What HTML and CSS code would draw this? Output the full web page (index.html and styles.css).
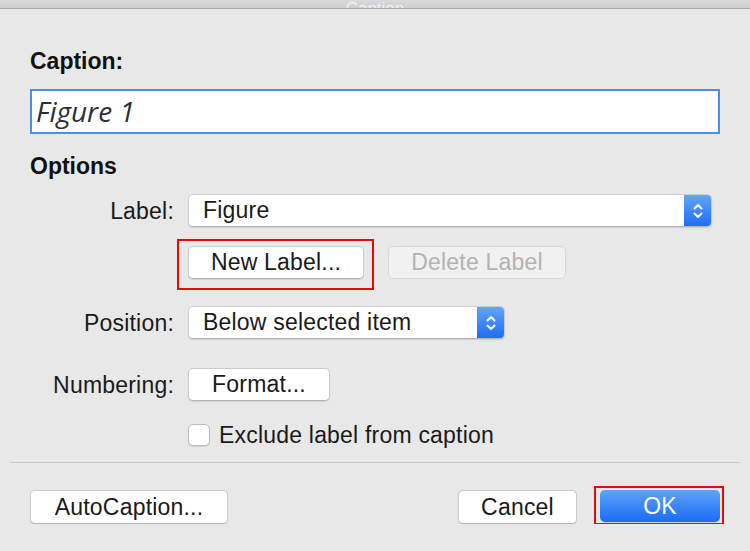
FILE: index.html
```html
<!DOCTYPE html>
<html lang="en">
<head>
  <meta charset="UTF-8">
  <title>Caption</title>
  <link rel="stylesheet" href="styles.css">
</head>
<body>
  <div class="titlebar"><span class="title">Caption</span></div>

  <div class="content">
    <h2 class="heading caption-heading">Caption:</h2>
    <div class="caption-input">Figure 1</div>

    <h2 class="heading options-heading">Options</h2>

    <div class="row row-label">
      <span class="row-name">Label:</span>
      <div class="select select-wide">
        <span class="select-text">Figure</span>
        <span class="stepper">
          <svg width="14" height="20" viewBox="0 0 14 20"><path d="M3.5 7.5 L7 4 L10.5 7.5 M3.5 12.5 L7 16 L10.5 12.5" fill="none" stroke="#fff" stroke-width="2" stroke-linecap="round" stroke-linejoin="round"/></svg>
        </span>
      </div>
    </div>

    <div class="row row-buttons">
      <span class="row-name"></span>
      <button class="btn btn-newlabel marked">New Label...</button>
      <button class="btn btn-disabled btn-delete">Delete Label</button>
    </div>

    <div class="row row-position">
      <span class="row-name">Position:</span>
      <div class="select select-position">
        <span class="select-text">Below selected item</span>
        <span class="stepper">
          <svg width="14" height="20" viewBox="0 0 14 20"><path d="M3.5 7.5 L7 4 L10.5 7.5 M3.5 12.5 L7 16 L10.5 12.5" fill="none" stroke="#fff" stroke-width="2" stroke-linecap="round" stroke-linejoin="round"/></svg>
        </span>
      </div>
    </div>

    <div class="row row-numbering">
      <span class="row-name">Numbering:</span>
      <button class="btn btn-format">Format...</button>
    </div>

    <div class="row row-check">
      <span class="row-name"></span>
      <span class="checkbox"></span>
      <span class="check-text">Exclude label from caption</span>
    </div>
  </div>

  <div class="separator"></div>

  <div class="footer">
    <button class="btn btn-auto">AutoCaption...</button>
    <div class="footer-right">
      <button class="btn btn-cancel">Cancel</button>
      <button class="btn btn-ok marked">OK</button>
    </div>
  </div>
</body>
</html>
```

FILE: styles.css
```css
body {
  margin: 0;
  background: #e8e8e8;
  font-family: 'Liberation Sans', Arial, sans-serif;
  color: #1a1a1a;
  overflow: hidden;
}

.titlebar {
  height: 8px;
  overflow: hidden;
  background: linear-gradient(#dadada, #cfcfcf);
  border-bottom: 1px solid #aaaaaa;
  text-align: center;
}

.title {
  display: inline-block;
  margin-top: -13px;
  font-size: 17px;
  line-height: 20px;
  color: #f0f0f0;
}

.content {
  padding: 0 30px;
}

.heading {
  margin: 0;
  font-size: 23px;
  font-weight: bold;
  line-height: 24px;
  color: #111;
}

.caption-heading {
  padding-top: 40px;
}

.caption-input {
  margin-top: 16px;
  height: 41px;
  border: 2px solid #4a8ee6;
  background: #fff;
  font-family: 'Open Sans', sans-serif;
  font-style: italic;
  font-size: 28px;
  line-height: 40px;
  padding-left: 4px;
  color: #2b2f36;
}

.options-heading {
  margin-top: 20px;
}

.row {
  display: flex;
  align-items: center;
  font-size: 23px;
  line-height: 22px;
  letter-spacing: 0.2px;
}

.row-name {
  width: 144px;
  margin-right: 14px;
  text-align: right;
  flex: none;
}

.row-label { margin-top: 16px; }
.row-buttons { margin-top: 19px; }
.row-position { margin-top: 27px; }
.row-numbering { margin-top: 29px; }
.row-check { margin-top: 23px; }

.select {
  display: flex;
  align-items: stretch;
  height: 33px;
  box-sizing: border-box;
  background: #fff;
  border: 1px solid #cdcdcd;
  border-bottom-color: #b5b5b5;
  border-radius: 5px;
  box-shadow: 0 1px 1px rgba(0, 0, 0, 0.12);
  overflow: hidden;
}

.select-wide { width: 524px; }
.select-position { width: 317px; }

.select-text {
  flex: 1;
  padding-left: 14px;
  line-height: 31px;
}

.stepper {
  width: 27px;
  display: flex;
  align-items: center;
  justify-content: center;
  background: linear-gradient(#62a4f8, #1f6ef4);
}

.btn {
  position: relative;
  height: 33px;
  box-sizing: border-box;
  background: #fff;
  border: 1px solid #cbcbcb;
  border-bottom-color: #b3b3b3;
  border-radius: 5px;
  box-shadow: 0 1px 1px rgba(0, 0, 0, 0.1);
  font-family: inherit;
  font-size: 23px;
  letter-spacing: 0.2px;
  color: #1a1a1a;
  padding: 0;
}

.btn-newlabel { width: 176px; }

.btn-delete {
  width: 178px;
  margin-left: 24px;
}

.btn-disabled {
  background: #f1f1f1;
  border-color: #d8d8d8;
  color: #b3b3b3;
  box-shadow: none;
}

.btn-format { width: 142px; }

/* red highlight boxes drawn over the screenshot */
.marked::after {
  content: "";
  position: absolute;
  border: 2px solid #e30a0a;
}

.btn-newlabel.marked::after {
  top: -8px;
  left: -12px;
  right: -11px;
  bottom: -12px;
}

.checkbox {
  width: 22px;
  height: 22px;
  box-sizing: border-box;
  background: #fff;
  border: 1px solid #bdbdbd;
  border-radius: 5px;
  box-shadow: 0 1px 1px rgba(0, 0, 0, 0.1);
}

.check-text {
  margin-left: 9px;
}

.separator {
  margin: 16px 10px 0;
  height: 1px;
  background: #cacaca;
}

.footer {
  display: flex;
  justify-content: space-between;
  padding: 27px 30px 0;
}

.footer-right {
  display: flex;
  gap: 23px;
}

.btn-auto { width: 198px; height: 34px; }
.btn-cancel { width: 119px; height: 34px; }

.btn-ok {
  width: 120px;
  height: 32px;
  border: none;
  color: #fff;
  background: linear-gradient(#5fa3f9, #1a6cf4);
}

.btn-ok.marked::after {
  top: -4px;
  left: -6px;
  right: -4px;
  bottom: -3px;
}
```
